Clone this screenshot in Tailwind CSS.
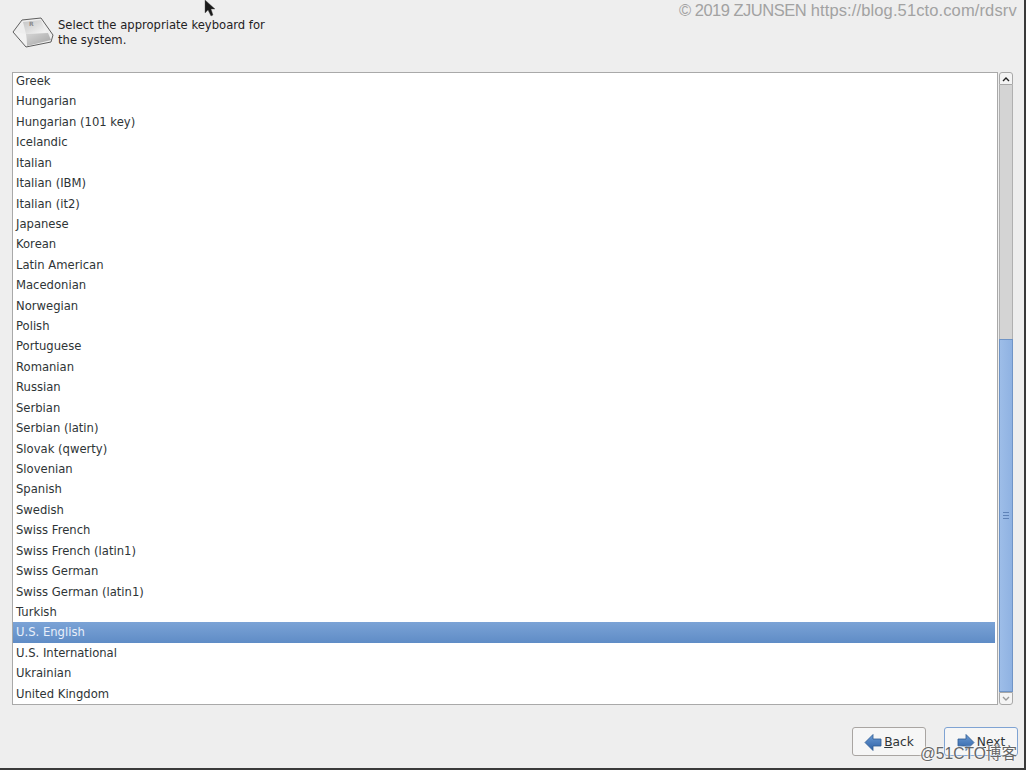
<!DOCTYPE html>
<html>
<head>
<meta charset="utf-8">
<script src="https://cdn.jsdelivr.net/npm/@tailwindcss/browser@4"></script>
</head>
<body class="m-0">
<div class="relative w-[1028px] h-[772px] overflow-hidden bg-white font-['DejaVu_Sans',sans-serif] text-[#2e3436]">
  <div class="w-[1026px] h-[770px] bg-[#eeeeee] border-r-2 border-b-2 border-[#3a3a3a] flex flex-col">
    <div class="h-[72px] pl-[12px] pt-[15px] flex items-start gap-[4px]">
      <svg class="w-[42px] h-[34px] shrink-0" viewBox="0 0 42 34">
        <defs>
          <linearGradient id="f" x1="0" y1="0" x2="1" y2="1"><stop offset="0" stop-color="#d6d6d6"/><stop offset="1" stop-color="#a4a4a4"/></linearGradient>
          <linearGradient id="t" x1="0" y1="0" x2="1" y2="1"><stop offset="0" stop-color="#c4c4c4"/><stop offset="1" stop-color="#f7f7f7"/></linearGradient>
        </defs>
        <path d="M1 17 L10 5 L29 3 L41 20 L39 27 L14 32 Z" fill="#eeeeee" stroke="#5e5e5e" stroke-width="1" stroke-linejoin="round"/>
        <path d="M11 7 L29 5 L34 17 L14 19 Z" fill="url(#t)"/>
        <path d="M14 19 L36 18 L39 25 L15 31 Z" fill="url(#f)"/>
        <path d="M2 17 L14 19 L15 31 Z" fill="#f2f2f2"/>
        <text x="17" y="11" font-size="6" font-weight="700" fill="#8c8c8c" font-family="DejaVu Sans">R</text>
      </svg>
      <p class="w-[222px] pt-[3px] text-[11.6px] leading-[15px] text-[#1f2224]">Select the appropriate keyboard for the system.</p>
    </div>
    <div class="flex pl-[12px] h-[633px]">
      <div class="w-[986px] h-full bg-white border border-[#a9a9a9] overflow-hidden text-[11.6px] pl-[3px] pr-[2px]">
        <div class="flex flex-col -mt-[2px]">
          <div class="h-[20.43px] leading-[20.43px]">Greek</div>
          <div class="h-[20.43px] leading-[20.43px]">Hungarian</div>
          <div class="h-[20.43px] leading-[20.43px]">Hungarian (101 key)</div>
          <div class="h-[20.43px] leading-[20.43px]">Icelandic</div>
          <div class="h-[20.43px] leading-[20.43px]">Italian</div>
          <div class="h-[20.43px] leading-[20.43px]">Italian (IBM)</div>
          <div class="h-[20.43px] leading-[20.43px]">Italian (it2)</div>
          <div class="h-[20.43px] leading-[20.43px]">Japanese</div>
          <div class="h-[20.43px] leading-[20.43px]">Korean</div>
          <div class="h-[20.43px] leading-[20.43px]">Latin American</div>
          <div class="h-[20.43px] leading-[20.43px]">Macedonian</div>
          <div class="h-[20.43px] leading-[20.43px]">Norwegian</div>
          <div class="h-[20.43px] leading-[20.43px]">Polish</div>
          <div class="h-[20.43px] leading-[20.43px]">Portuguese</div>
          <div class="h-[20.43px] leading-[20.43px]">Romanian</div>
          <div class="h-[20.43px] leading-[20.43px]">Russian</div>
          <div class="h-[20.43px] leading-[20.43px]">Serbian</div>
          <div class="h-[20.43px] leading-[20.43px]">Serbian (latin)</div>
          <div class="h-[20.43px] leading-[20.43px]">Slovak (qwerty)</div>
          <div class="h-[20.43px] leading-[20.43px]">Slovenian</div>
          <div class="h-[20.43px] leading-[20.43px]">Spanish</div>
          <div class="h-[20.43px] leading-[20.43px]">Swedish</div>
          <div class="h-[20.43px] leading-[20.43px]">Swiss French</div>
          <div class="h-[20.43px] leading-[20.43px]">Swiss French (latin1)</div>
          <div class="h-[20.43px] leading-[20.43px]">Swiss German</div>
          <div class="h-[20.43px] leading-[20.43px]">Swiss German (latin1)</div>
          <div class="h-[20.43px] leading-[20.43px]">Turkish</div>
          <div class="h-[20.43px] leading-[20.43px] -ml-[3px] pl-[3px] bg-gradient-to-b from-[#7ba3d6] to-[#5f8cc6] text-[#e8effa]">U.S. English</div>
          <div class="h-[20.43px] leading-[20.43px]">U.S. International</div>
          <div class="h-[20.43px] leading-[20.43px]">Ukrainian</div>
          <div class="h-[20.43px] leading-[20.43px]">United Kingdom</div>
        </div>
      </div>
      <div class="ml-[1px] w-[14px] h-full flex flex-col">
        <div class="h-[13px] bg-[#f4f4f4] border border-[#a8a8a8] rounded-t-[3px] flex items-center justify-center">
          <svg class="w-[8px] h-[6px]" viewBox="0 0 8 6"><path d="M1 5 L4 2 L7 5" fill="none" stroke="#222" stroke-width="1.4"/></svg>
        </div>
        <div class="h-[254px] bg-[#d4d4d4] border-x border-[#b0b0b0]"></div>
        <div class="flex-1 bg-gradient-to-r from-[#9dbde8] to-[#8fb2e2] border border-[#6f94c6] flex items-center justify-center">
          <div class="w-[6px] h-[7px] border-y border-[#5f83b8] flex items-center"><div class="w-full h-px bg-[#5f83b8]"></div></div>
        </div>
        <div class="h-[13px] bg-[#f4f4f4] border border-[#a8a8a8] rounded-b-[3px] flex items-center justify-center">
          <svg class="w-[8px] h-[6px]" viewBox="0 0 8 6"><path d="M1 1 L4 4 L7 1" fill="none" stroke="#9a9a9a" stroke-width="1.4"/></svg>
        </div>
      </div>
    </div>
    <div class="flex justify-end gap-[18px] pr-[6px] pt-[22px]">
      <div class="w-[74px] h-[29px] bg-[#f6f6f6] border border-[#a9a5a2] rounded-[3px] flex items-center justify-center gap-[2px] text-[12.2px] pt-px">
        <svg class="w-[18px] h-[19px]" viewBox="0 0 18 19"><defs><linearGradient id="a" x1="0" y1="0" x2="0" y2="1"><stop offset="0" stop-color="#6a9ad4"/><stop offset="1" stop-color="#2f62a6"/></linearGradient></defs><path d="M1 9.5 L9 1.5 V6 H17 V13 H9 V17.5 Z" fill="url(#a)" stroke="#2f5a92" stroke-width="0.8" stroke-linejoin="round"/></svg>
        <span><span class="underline">B</span>ack</span>
      </div>
      <div class="w-[74px] h-[29px] bg-[#f6f6f6] border border-[#7fa3d3] rounded-[3px] flex items-center justify-center gap-[2px] text-[12.2px] pt-px">
        <svg class="w-[18px] h-[19px]" viewBox="0 0 18 19"><path d="M17 9.5 L9 1.5 V6 H1 V13 H9 V17.5 Z" fill="url(#a)" stroke="#2f5a92" stroke-width="0.8" stroke-linejoin="round"/></svg>
        <span><span class="underline">N</span>ext</span>
      </div>
    </div>
  </div>
  <svg class="absolute left-[204px] top-0 w-[12px] h-[18px]" viewBox="0 0 12 18"><path d="M1 0 L1 13 L4 10 L7 16 L9 15 L7 9 L11 9 Z" fill="#1a1a1a" stroke="#555" stroke-width="0.4"/></svg>
  <div class="absolute left-[679px] top-0 text-[16.5px] leading-[20px] font-['Liberation_Sans',sans-serif] text-[#a2a2a2] whitespace-nowrap"><span class="tracking-[-0.5px]">© 2019 ZJUNSEN</span> <span class="tracking-[0.12px]">https://blog.51cto.com/rdsrv</span></div>
  <div class="absolute left-[920px] top-[745px] text-[15.6px] leading-[18px] font-['Liberation_Sans','Noto_Sans_CJK_SC',sans-serif] text-[#666] [text-shadow:0_0_2px_#fff,0_0_2px_#fff] whitespace-nowrap">@51CTO博客</div>
</div>
</body>
</html>
